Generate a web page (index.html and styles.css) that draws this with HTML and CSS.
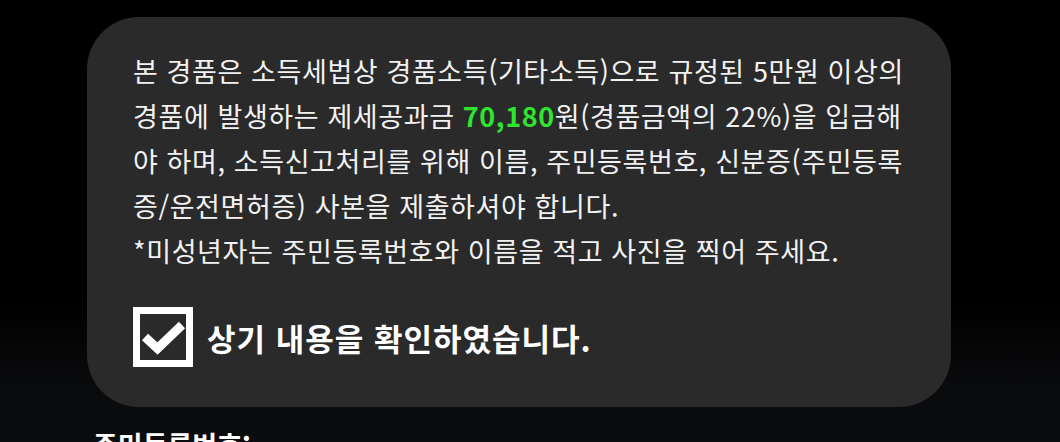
FILE: index.html
```html
<!DOCTYPE html>
<html lang="ko">

<head>
    <meta charset="utf-8">
    <title>경품 수령 안내</title>
    <link rel="stylesheet" href="styles.css">
</head>

<body>
    <div class="notice">
        <p class="notice-text">
            본 경품은 소득세법상 경품소득(기타소득)으로 규정된 5만원 이상의<br>
            경품에 발생하는 제세공과금 <span class="amount">70,180</span>원(경품금액의 22%)을 입금해<br>
            야 하며, 소득신고처리를 위해 이름, 주민등록번호, 신분증(주민등록<br>
            증/운전면허증) 사본을 제출하셔야 합니다.<br>
            *미성년자는 주민등록번호와 이름을 적고 사진을 찍어 주세요.
        </p>
        <label class="agree">
            <svg class="check" width="60" height="60" viewBox="0 0 60 60">
                <rect x="3.5" y="3.5" width="53" height="53" fill="none" stroke="#fff" stroke-width="7" />
                <path d="M12 30 L24.5 41.5 L49 18" fill="none" stroke="#fff" stroke-width="9" />
            </svg>
            <span>상기 내용을 확인하였습니다.</span>
        </label>
    </div>

    <h2 class="field-title">주민등록번호:</h2>
</body>
</html>
```

FILE: styles.css
```css
/* dark prize notice sheet */
body {
    margin: 0;
    min-height: 100vh;
    background: linear-gradient(#000 0, #000 300px, #0a0b0d 390px, #0b0c0f 100%);
    font-family: "Noto Sans CJK KR", "Noto Sans", sans-serif;
    color: #f2f2f2;
    overflow: hidden;
}

.notice {
    width: 864px;
    height: 390px;
    margin: 17px 0 0 87px;
    padding: 31px 46px 0;
    box-sizing: border-box;
    background-color: #2a2a2a;
    border-radius: 52px;
}

.notice-text {
    margin: 0;
    font-size: 27px;
    letter-spacing: 0.6px;
    line-height: 45px;
    white-space: nowrap;
}

.amount {
    color: #2fe52f;
    font-weight: 700;
}

.agree {
    display: flex;
    align-items: center;
    gap: 14px;
    margin-top: 34px;
    font-size: 31px;
    letter-spacing: 1px;
    font-weight: 700;
    color: #fff;
}

.check {
    display: block;
    flex: none;
}

.field-title {
    margin: 18px 0 0 93px;
    font-size: 27px;
    font-weight: 700;
    color: #fff;
}
```
